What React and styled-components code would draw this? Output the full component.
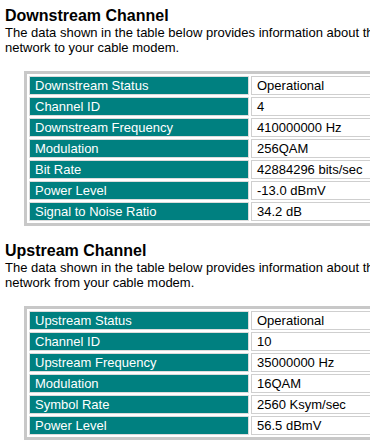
import React from 'react';
import styled, { createGlobalStyle } from 'styled-components';

const GlobalStyle = createGlobalStyle`
	html, body {
		margin: 0;
		padding: 0;
		overflow: hidden;
		background: #fff;
	}
	body {
		font-family: 'Liberation Sans', Arial, sans-serif;
		color: #000;
	}
`

const Page = styled.div`
	width: 700px;
	padding: 7px 5px 0 5px;
`

const Section = styled.section`
	margin-bottom: 16px;
`

const Heading = styled.h2`
	margin: 0;
	font-size: 16px;
	font-weight: bold;
	line-height: normal;
`

const Description = styled.p`
	margin: 0;
	font-size: 13px;
	line-height: 15px;
	white-space: nowrap;
`

const InfoTable = styled.table`
	margin: 16px 0 0 19px;
	width: 520px;
	border: 3px solid #c8c8c8;
	border-collapse: separate;
	border-spacing: 2px;
	font-size: 13px;
	line-height: 15px;
`

const LabelCell = styled.th`
	width: 208px;
	padding: 1px 5px;
	border: 1px solid #dcdcdc;
	background: #008080;
	color: #fff;
	font-weight: normal;
	text-align: left;
	white-space: nowrap;
`

const ValueCell = styled.td`
	padding: 1px 5px;
	border: 1px solid #cfcfcf;
	background: #fff;
	color: #000;
	white-space: nowrap;
`

const downstream = [
	['Downstream Status', 'Operational'],
	['Channel ID', '4'],
	['Downstream Frequency', '410000000 Hz'],
	['Modulation', '256QAM'],
	['Bit Rate', '42884296 bits/sec'],
	['Power Level', '-13.0 dBmV'],
	['Signal to Noise Ratio', '34.2 dB'],
];

const upstream = [
	['Upstream Status', 'Operational'],
	['Channel ID', '10'],
	['Upstream Frequency', '35000000 Hz'],
	['Modulation', '16QAM'],
	['Symbol Rate', '2560 Ksym/sec'],
	['Power Level', '56.5 dBmV'],
];

function ChannelSection({ title, lineOne, lineTwo, rows }) {
	return (
		<Section>
			<Heading>{title}</Heading>
			<Description>
				{lineOne}
				<br />
				{lineTwo}
			</Description>
			<InfoTable>
				<tbody>
					{rows.map(([label, value]) => (
						<tr key={label}>
							<LabelCell>{label}</LabelCell>
							<ValueCell>{value}</ValueCell>
						</tr>
					))}
				</tbody>
			</InfoTable>
		</Section>
	);
}

export default function App() {
	return (
		<>
			<GlobalStyle />
			<Page>
				<ChannelSection
					title="Downstream Channel"
					lineOne="The data shown in the table below provides information about the signal traveling downstream from the"
					lineTwo="network to your cable modem."
					rows={downstream}
				/>
				<ChannelSection
					title="Upstream Channel"
					lineOne="The data shown in the table below provides information about the signal traveling upstream to the"
					lineTwo="network from your cable modem."
					rows={upstream}
				/>
			</Page>
		</>
	);
}
